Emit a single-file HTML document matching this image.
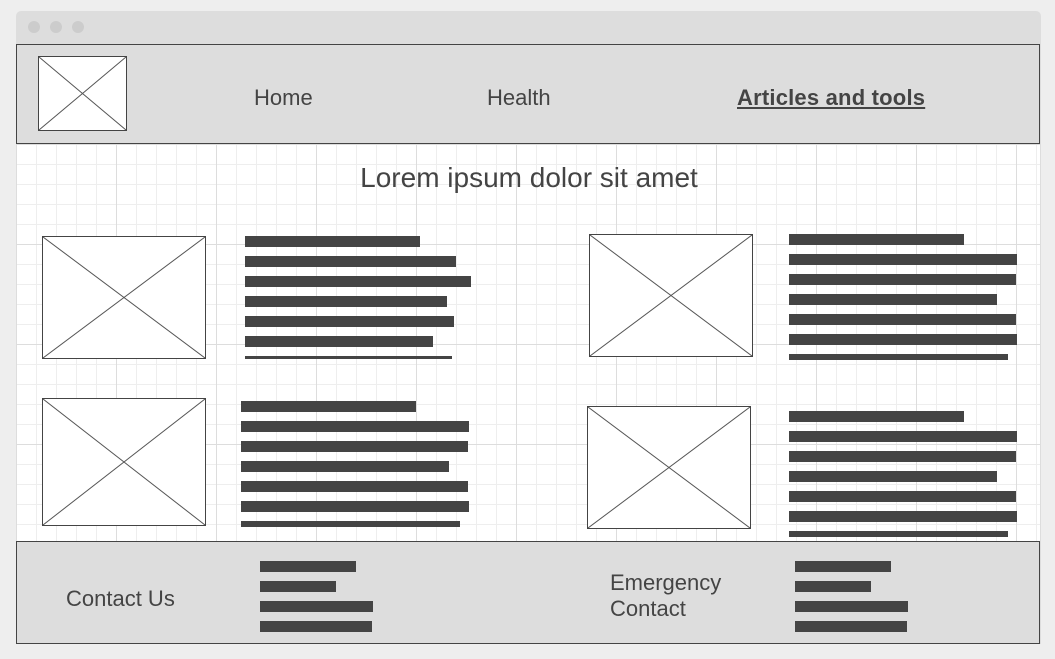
<!DOCTYPE html><html><head><style>
*{margin:0;padding:0;box-sizing:border-box}
body{width:1055px;height:659px;background:#eee;position:relative;overflow:hidden;font-family:"Liberation Sans",sans-serif;color:#444}
.win{position:absolute;left:16px;top:11px;width:1025px;height:633px;background:#ddd;border-radius:5px 5px 0 0}
.dot{position:absolute;top:21px;width:12px;height:12px;border-radius:50%;background:#ccc}
.main{position:absolute;left:16px;top:144px;width:1024px;height:398px;background-color:#fff;
background-image:linear-gradient(#ddd 1px,transparent 1px),linear-gradient(90deg,#ddd 1px,transparent 1px),linear-gradient(#eee 1px,transparent 1px),linear-gradient(90deg,#eee 1px,transparent 1px);
background-size:100px 100px,100px 100px,20px 20px,20px 20px;background-position:0 0,0 0,0 0,0 0}
.hdr{position:absolute;left:16px;top:44px;width:1024px;height:100px;background:#ddd;border:1px solid #444}
.ftr{position:absolute;left:16px;top:541px;width:1024px;height:103px;background:#ddd;border:1px solid #444}
.img{position:absolute;background:#fff;border:1px solid #444}
.img svg{position:absolute;left:0;top:0;width:100%;height:100%}
.b{position:absolute;height:11px;background:#444}
.t{position:absolute;font-size:22px;line-height:1.2}
</style></head><body>
<div class="win"></div>
<div class="dot" style="left:28px"></div><div class="dot" style="left:50px"></div><div class="dot" style="left:72px"></div>
<div class="hdr"></div>
<div class="main"></div>
<div class="ftr"></div>

<div class="img" style="left:38px;top:56px;width:89px;height:75px"><svg viewBox="0 0 10 10" preserveAspectRatio="none"><path d="M0 0L10 10M10 0L0 10" stroke="#555" stroke-width="1" vector-effect="non-scaling-stroke"/></svg></div>
<div class="t" style="left:254px;top:85px">Home</div>
<div class="t" style="left:487px;top:85px">Health</div>
<div class="t" style="left:737px;top:85px;font-weight:bold;text-decoration:underline;letter-spacing:0.2px">Articles and tools</div>
<div class="t" style="left:0;width:1058px;text-align:center;top:161px;font-size:28px">Lorem ipsum dolor sit amet</div>

<div class="img" style="left:42px;top:236px;width:164px;height:123px"><svg viewBox="0 0 10 10" preserveAspectRatio="none"><path d="M0 0L10 10M10 0L0 10" stroke="#555" vector-effect="non-scaling-stroke"/></svg></div>
<div class="img" style="left:589px;top:234px;width:164px;height:123px"><svg viewBox="0 0 10 10" preserveAspectRatio="none"><path d="M0 0L10 10M10 0L0 10" stroke="#555" vector-effect="non-scaling-stroke"/></svg></div>
<div class="img" style="left:42px;top:398px;width:164px;height:128px"><svg viewBox="0 0 10 10" preserveAspectRatio="none"><path d="M0 0L10 10M10 0L0 10" stroke="#555" vector-effect="non-scaling-stroke"/></svg></div>
<div class="img" style="left:587px;top:406px;width:164px;height:123px"><svg viewBox="0 0 10 10" preserveAspectRatio="none"><path d="M0 0L10 10M10 0L0 10" stroke="#555" vector-effect="non-scaling-stroke"/></svg></div>

<div class="b" style="left:245px;top:236px;width:175px"></div>
<div class="b" style="left:245px;top:256px;width:211px"></div>
<div class="b" style="left:245px;top:276px;width:226px"></div>
<div class="b" style="left:245px;top:296px;width:202px"></div>
<div class="b" style="left:245px;top:316px;width:209px"></div>
<div class="b" style="left:245px;top:336px;width:188px"></div>
<div class="b" style="left:245px;top:356px;width:207px;height:3px"></div>

<div class="b" style="left:789px;top:234px;width:175px"></div>
<div class="b" style="left:789px;top:254px;width:228px"></div>
<div class="b" style="left:789px;top:274px;width:227px"></div>
<div class="b" style="left:789px;top:294px;width:208px"></div>
<div class="b" style="left:789px;top:314px;width:227px"></div>
<div class="b" style="left:789px;top:334px;width:228px"></div>
<div class="b" style="left:789px;top:354px;width:219px;height:6px"></div>

<div class="b" style="left:241px;top:401px;width:175px"></div>
<div class="b" style="left:241px;top:421px;width:228px"></div>
<div class="b" style="left:241px;top:441px;width:227px"></div>
<div class="b" style="left:241px;top:461px;width:208px"></div>
<div class="b" style="left:241px;top:481px;width:227px"></div>
<div class="b" style="left:241px;top:501px;width:228px"></div>
<div class="b" style="left:241px;top:521px;width:219px;height:6px"></div>

<div class="b" style="left:789px;top:411px;width:175px"></div>
<div class="b" style="left:789px;top:431px;width:228px"></div>
<div class="b" style="left:789px;top:451px;width:227px"></div>
<div class="b" style="left:789px;top:471px;width:208px"></div>
<div class="b" style="left:789px;top:491px;width:227px"></div>
<div class="b" style="left:789px;top:511px;width:228px"></div>
<div class="b" style="left:789px;top:531px;width:219px;height:6px"></div>

<div class="t" style="left:66px;top:586px">Contact Us</div>
<div class="t" style="left:610px;top:570px;line-height:26px">Emergency<br>Contact</div>
<div class="b" style="left:260px;top:561px;width:96px"></div>
<div class="b" style="left:260px;top:581px;width:76px"></div>
<div class="b" style="left:260px;top:601px;width:113px"></div>
<div class="b" style="left:260px;top:621px;width:112px"></div>
<div class="b" style="left:795px;top:561px;width:96px"></div>
<div class="b" style="left:795px;top:581px;width:76px"></div>
<div class="b" style="left:795px;top:601px;width:113px"></div>
<div class="b" style="left:795px;top:621px;width:112px"></div>
</body></html>
